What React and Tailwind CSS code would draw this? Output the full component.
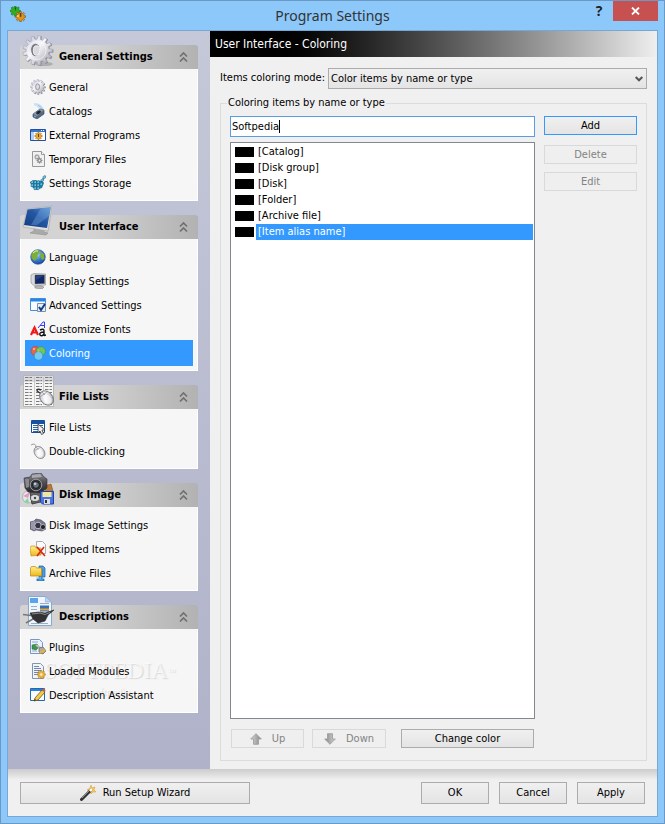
import React from "react";

const gearPath = (cx, cy, outer, inner, teeth) => {
  const points = [];
  const step = (Math.PI * 2) / teeth;
  for (let i = 0; i < teeth; i++) {
    const a = i * step;
    [[-0.3, inner], [-0.2, outer], [0.2, outer], [0.3, inner]].forEach(([t, r]) => {
      points.push(`${(cx + Math.cos(a + t * step) * r).toFixed(2)} ${(cy + Math.sin(a + t * step) * r).toFixed(2)}`);
    });
  }
  return `M${points.join("L")}Z`;
};

const Small = ({ children }) => (
  <svg viewBox="0 0 16 16" className="size-4 shrink-0" aria-hidden="true">{children}</svg>
);
const Large = ({ children }) => (
  <svg viewBox="0 0 32 32" className="size-8 shrink-0" aria-hidden="true">{children}</svg>
);

const Defs = () => (
  <svg className="absolute size-0" aria-hidden="true">
    <defs>
      <linearGradient id="silver" x1="0" y1="0" x2="1" y2="1">
        <stop offset="0" stopColor="#b9bcd0" /><stop offset=".45" stopColor="#f6f6fa" /><stop offset="1" stopColor="#9a9aa2" />
      </linearGradient>
      <linearGradient id="screen" x1="0" y1="1" x2="1" y2="0">
        <stop offset="0" stopColor="#123a80" /><stop offset=".55" stopColor="#2458a4" /><stop offset="1" stopColor="#5f98d4" />
      </linearGradient>
      <linearGradient id="folder" x1="0" y1="0" x2="0" y2="1">
        <stop offset="0" stopColor="#fff08a" /><stop offset="1" stopColor="#efb81c" />
      </linearGradient>
      <linearGradient id="dark" x1="0" y1="0" x2="0" y2="1">
        <stop offset="0" stopColor="#8b8b90" /><stop offset=".5" stopColor="#4b4b50" /><stop offset="1" stopColor="#28282b" />
      </linearGradient>
      <linearGradient id="arrow" x1="0" y1="0" x2="1" y2="0">
        <stop offset="0" stopColor="#d6d6d6" /><stop offset="1" stopColor="#858585" />
      </linearGradient>
      <radialGradient id="globe" cx=".4" cy=".3" r=".8">
        <stop offset="0" stopColor="#bfe0ff" /><stop offset=".5" stopColor="#3b7fd8" /><stop offset="1" stopColor="#123a8a" />
      </radialGradient>
    </defs>
  </svg>
);

const AppIcon = () => (
  <Small>
    <path d={gearPath(5.2, 5, 5.2, 3.8, 8)} fill="#2fae22" stroke="#1b6e15" strokeWidth=".5" />
    <path d="M4.6 1.5h1.6L5.8 5z" fill="#124e0e" />
    <path d={gearPath(10.5, 10.6, 5.2, 3.8, 8)} fill="#e0941b" stroke="#86500a" strokeWidth=".6" />
    <path d="M9.8 7h1.6v3.8h-1.6z" fill="#5a4030" /><circle cx="8" cy="10" r="1" fill="#ffd37a" />
  </Small>
);

const GearLarge = () => (
  <Large>
    <ellipse cx="22" cy="29" rx="9" ry="2" fill="#808080" opacity=".45" />
    <path d={gearPath(16.5, 16, 15, 11.6, 13)} fill="#8b8b99" />
    <path d={gearPath(15.5, 15.5, 14.8, 11.4, 13)} fill="url(#silver)" stroke="#a3a5b5" strokeWidth=".6" />
    <circle cx="15" cy="15.5" r="9" fill="none" stroke="#fff" strokeOpacity=".6" />
    <ellipse cx="13.5" cy="15" rx="4.4" ry="6.2" fill="#77777f" />
    <ellipse cx="14.5" cy="15.5" rx="3.2" ry="4.8" fill="#d9dae0" stroke="#f5f5f5" />
  </Large>
);
const MonitorLarge = () => (
  <Large>
    <path d="M12 22l9 1 1 4 4 1-2 2-16-2 4-2z" fill="#a9a9a9" stroke="#888" strokeWidth=".5" />
    <path d="M28 3l3-1-4 24-3 1z" fill="#c9c9c9" />
    <path d="M5 4L30 1 26 26 1 22z" fill="#dedede" stroke="#a5a5a5" strokeWidth=".6" />
    <path d="M5.500 4.500L29 2 25 23 2 20z" fill="url(#screen)" />
    <path d="M19 3l10-1-2 9-12 9H9z" fill="#8fc0ee" opacity=".3" />
  </Large>
);
const ListsLarge = () => (
  <Large>
    <path d="M1.5 .5h30v31h-30z" fill="#f5f5f5" stroke="#b7b7b7" />
    <path d="M2 1h29v6H2z" fill="#c9c9cf" opacity=".6" />
    {[3, 6, 9, 12, 15, 18, 21, 24, 27, 30].map((y) => (
      <path key={y} d={`M3 ${y - 0.5}h7M14 ${y - 0.5}h6M23 ${y - 0.5}h7`} stroke="#7c7c7c" strokeWidth="1" strokeDasharray="3 .5 1 .5" />
    ))}
    <path d="M12.5 2v28M21.5 2v28" stroke="#bbb" strokeWidth=".7" />
    <path d="M21 20l-6-4q0-3 4-1" fill="none" stroke="#333" strokeWidth="1.4" />
    <ellipse cx="24.500" cy="23" rx="6" ry="8" transform="rotate(-42 24.500 23)" fill="url(#silver)" stroke="#666" strokeWidth=".8" />
    <ellipse cx="25.500" cy="24" rx="3.500" ry="5" transform="rotate(-42 25.500 24)" fill="#fff" opacity=".6" />
    <path d="M18 22l8-6M20 17l3 3" stroke="#888" strokeWidth=".7" />
  </Large>
);
const CameraLarge = () => (
  <Large>
    <path d="M22 13l7-2 2 7-6 3z" fill="#b7793a" stroke="#714315" strokeWidth=".5" />
    <ellipse cx="6" cy="24" rx="5.5" ry="6" fill="#e4e7ea" stroke="#999" strokeWidth=".6" />
    <path d="M1 23l5 2 2-6z" fill="#e498c4" /><path d="M2 29l4-4 1 5z" fill="#83d795" />
    <path d="M8 19l10-2 4 11-12 3z" fill="#66666a" stroke="#3c3c3c" />
    <ellipse cx="13" cy="25" rx="4.500" ry="3.500" fill="#ddd" stroke="#555" /><circle cx="13" cy="25" r="1.200" fill="#444" />
    <path d="M2 5l6-1 2-3 9-1 3 4 3 2v9l-6 5-13-1-3-4z" fill="url(#dark)" stroke="#333" strokeWidth=".6" />
    <path d="M10 2l8-1 2 3-10 1z" fill="#aaaaae" /><path d="M3 6h4v8l-3 1z" fill="#8a8a8e" />
    <circle cx="14" cy="12" r="5.800" fill="#343438" stroke="#9a9aa0" /><circle cx="14" cy="12" r="3.4" fill="#66717c" stroke="#18181a" />
    <circle cx="13" cy="10.8" r="1.3" fill="#c2d0dc" />
    <path d="M18.500 18.500h13v12.500h-11l-2-2z" fill="#4a74e4" stroke="#2243a0" />
    <path d="M20.500 19h9v5h-9z" fill="#f1e6a0" /><path d="M22 26h6v5h-6z" fill="#d9dbe5" /><path d="M23 27h2v3h-2z" fill="#333" />
  </Large>
);
const PluginsLarge = () => (
  <Large>
    <path d="M6.500 1.500h17l6 5.500v23.500h-23z" fill="#eef5fd" stroke="#8ba9cc" />
    <path d="M8 3h8v5H8z" fill="#5aa5ea" /><path d="M23.500 1.500l6 5.500h-6z" fill="#b5d6f5" stroke="#8ba9cc" strokeWidth=".6" />
    <path d="M18 10.500h9v6h-9z" fill="#3570b5" /><path d="M18 13.500h9v2h-9z" fill="#dfa33a" />
    <path d="M9 11.500h6M9 14.500h6M18 8.500h9M9 28.500h17" stroke="#9baec2" />
    <path d="M1 19.500l8 1M4 28l7-4" stroke="#777" strokeWidth="1.6" />
    <path d="M8 18l9-1 6 1 9-3-6 5-3 6-7 2-5-4z" fill="#333336" stroke="#222" strokeWidth=".6" />
    <path d="M10 19l8-1 5 1.500 5-2" fill="none" stroke="#8a8a8a" />
  </Large>
);

const General = () => (
  <Small>
    <path d={gearPath(8.4, 8.4, 7.4, 5.6, 12)} fill="#888896" />
    <path d={gearPath(7.8, 7.8, 7.4, 5.6, 12)} fill="url(#silver)" stroke="#a5a7b5" strokeWidth=".4" />
    <ellipse cx="7.6" cy="7.8" rx="2" ry="3" fill="#dcdce1" stroke="#888" strokeWidth=".8" />
  </Small>
);
const Catalogs = () => (
  <Small>
    <path d="M4 0q9 0 10 8l-3 1Q9 4 4 2z" fill="#c6e2f4" /><path d="M8 2q4 2 5 6" stroke="#a5c8de" fill="none" />
    <path d="M3 11l7-5 4 1v4l-7 5-4-2z" fill="#566780" stroke="#34435a" strokeWidth=".6" />
    <path d="M3 11l7-5 4 1-7 6z" fill="#8596ac" /><ellipse cx="8.500" cy="9.500" rx="2.500" ry="1.500" transform="rotate(-30 8.500 9.500)" fill="#24262c" /><path d="M4 13l2 1" stroke="#77b4ff" />
  </Small>
);
const External = () => (
  <Small>
    <path d="M.5 2.5h15v11H.5z" fill="#fff" stroke="#244f9e" /><path d="M1 3h14v2H1z" fill="#3878cc" /><path d="M11 3h1v1h-1zm2 0h1v1h-1z" fill="#fff" />
    <path d="M1 5v8h3V5z" fill="#b3d1f2" /><path d={gearPath(8.5, 9, 3.8, 2.7, 8)} fill="#e9a92d" stroke="#a36314" strokeWidth=".5" /><path d="M8 7h1v3H8z" fill="#64401b" />
  </Small>
);
const Temporary = () => (
  <Small>
    <path d="M2.5.5h9l3 3v12h-12z" fill="#f1f1f1" stroke="#999" /><path d="M11.5.5v3h3" fill="#fff" stroke="#999" />
    <path d={gearPath(7, 6, 3, 2.2, 8)} fill="#aaa" /><circle cx="7" cy="6" r="1" fill="#eee" />
    <path d={gearPath(9.5, 9.5, 3, 2.2, 8)} fill="#8a8a8a" /><circle cx="9.500" cy="9.500" r="1" fill="#eee" />
  </Small>
);
const Storage = () => (
  <Small>
    <path d="M0 7l4-2 6 1 2-1 2 3-2 5-6 2-4-3z" fill="#237fa8" />
    {[[1, 6], [4, 6], [7, 6], [1, 9], [4, 9], [7, 9], [10, 8], [4, 12], [7, 12], [11, 4], [13, 1]].map(([x, y]) => (
      <path key={`${x}-${y}`} d={`M${x} ${y + 0.8}l1-1h1.5v2l-1 .8H${x}z`} fill="#69c4e4" stroke="#0e5579" strokeWidth=".5" />
    ))}
  </Small>
);
const Language = () => (
  <Small>
    <circle cx="8" cy="8" r="7.3" fill="url(#globe)" stroke="#234c91" strokeWidth=".6" />
    <path d="M1.500 5q3-5 7-4l1 3-2 2 0 3-3 3-3-3zM11 3l3 2 .5 5-2.500 1-2-4z" fill="#7dae35" /><path d="M3 4q3-3 5-2" stroke="#e9f5c5" fill="none" />
  </Small>
);
const Display = () => (
  <Small>
    <path d="M5 12l6 1 3 1-2 2-7-1z" fill="#b9b9b9" stroke="#777" strokeWidth=".5" />
    <path d="M1 2l3-1.500 11.500.5v11l-11 1-3.500-3z" fill="#dadada" stroke="#888" strokeWidth=".6" /><path d="M5 2h9.500v8.500L5 11z" fill="#102869" stroke="#666" strokeWidth=".5" /><path d="M6 3h7l-7 4z" fill="#2a427f" />
  </Small>
);
const Advanced = () => (
  <Small>
    <path d="M.5 1.5h15v12H.5z" fill="#f8fbff" stroke="#438dda" /><path d="M1 2h14v2.5H1z" fill="#2685e8" />
    <path d="M7.5 6.5h8v8h-8z" fill="#e7eef7" stroke="#7d90aa" /><path d="M9 10l2 3 4-6" fill="none" stroke="#123d87" strokeWidth="2" />
  </Small>
);
const Fonts = () => (
  <Small>
    <path d="M1 14L4.500 6.500 8 14M3 11.5h4" fill="none" stroke="#f01818" strokeWidth="2.200" />
    <path d="M8 7l5-6h1.500v6M10 4.500h5" fill="none" stroke="#3939f4" strokeWidth="1" />
    <path d="M10 9q4-2 4 1v4q0 1 2 0M14 11q-5 0-4 3 2 2 4-1" fill="none" stroke="#111" strokeWidth="1.4" />
  </Small>
);
const ColoringIcon = () => (
  <Small>
    <circle cx="5.5" cy="6" r="4.5" fill="#ec6549" stroke="#c33d26" strokeWidth=".6" /><circle cx="10.8" cy="6.3" r="4.6" fill="#6fc75c" stroke="#3e983a" strokeWidth=".6" />
    <circle cx="8.5" cy="10.8" r="4.4" fill="#73c9ee" stroke="#288ec1" strokeWidth=".7" /><path d="M8 4q2 1 1.500 3.500Q6.500 7 8 4" fill="#e5ae4e" /><circle cx="4" cy="4" r="1" fill="#ffc4a9" />
  </Small>
);
const FileList = () => (
  <Small>
    <path d="M1.5 1.5h13v12h-13z" fill="#fff" stroke="#174f9e" /><path d="M2 2h12v3H2z" fill="#17539f" />
    <path d="M3 6.500h10M3 8.500h10M3 10.500h10M3 12.500h10" stroke="#2768b5" /><path d="M8 5v9l2-2 1.5 3.5 2-1L12 11h3z" fill="#f0f0f0" stroke="#333" strokeWidth=".8" />
  </Small>
);
const Mouse = () => (
  <Small>
    <path d="M1 2q5-3 5 3" fill="none" stroke="#999" /><ellipse cx="9.5" cy="9.5" rx="5" ry="6.5" transform="rotate(-34 9.5 9.5)" fill="url(#silver)" stroke="#888" strokeWidth=".8" />
    <path d="M4 8l7-4M6 4l3 3" stroke="#999" strokeWidth=".7" /><ellipse cx="10" cy="10" rx="3" ry="4" transform="rotate(-34 10 10)" fill="#fff" opacity=".7" />
  </Small>
);
const Camera = () => (
  <Small>
    <path d="M0 5l4-1 2-2 5 1 4 3 1 6-4 2-6-1-2 1-4-2z" fill="#77768c" stroke="#4a485c" strokeWidth=".6" /><path d="M2 5v7M4 4v9" stroke="#bcbcd0" />
    <circle cx="8" cy="8.5" r="3.3" fill="#353441" stroke="#c2c2cf" /><circle cx="13" cy="10" r="2.6" fill="#24242d" stroke="#a6a6b5" />
  </Small>
);
const Skipped = () => (
  <Small>
    <path d="M6.500.5h6l3 3v9h-9z" fill="#fafafa" stroke="#aaa" /><path d="M0 7l1-2h4l1 2h5v7L1 15z" fill="url(#folder)" stroke="#b78417" strokeWidth=".6" />
    <path d="M7 6l8 9M14 6l-7 9" stroke="#dc2416" strokeWidth="1.600" />
  </Small>
);
const Archive = () => (
  <Small>
    <path d="M9 1h4l2 2v9h-3v2h2v2H7v-2h2v-3h3V4H9z" fill="#4d9fe0" stroke="#1560a3" strokeWidth=".7" />
    <path d="M.5 3l1-1.500h4l1 1.500h5v8H.5z" fill="url(#folder)" stroke="#b78417" strokeWidth=".7" /><path d="M6 13h5" stroke="#8cc9f2" />
  </Small>
);
const Plugin = () => (
  <Small>
    <path d="M.5.5h9l3 3v11H.5z" fill="#eaf2fc" stroke="#7896be" /><path d="M2 3h6M2 12h5" stroke="#91add1" />
    <path d="M2 6l5-1 2 3-3 3-4-1z" fill="#40944d" stroke="#226332" strokeWidth=".5" /><path d="M6 6l6 4" stroke="#bbb" strokeWidth="2" />
    <path d="M9 9l4-1 3 4-3 3-4-2z" fill="#b0aca1" stroke="#686250" strokeWidth=".7" /><path d="M10 14l5-3" stroke="#e7b32f" strokeWidth="2" />
  </Small>
);
const Modules = () => (
  <Small>
    <path d="M2.5.5h8l3 3v12h-11z" fill="#f0f4fb" stroke="#8193ae" /><path d="M4 3.500h5M4 5.500h7M4 7.500h7M4 9.500h5M4 11.500h4" stroke="#7187ad" />
    <path d={gearPath(11.3, 11.5, 4.2, 3, 8)} fill="#eeb33e" stroke="#a96b14" strokeWidth=".5" /><circle cx="11.3" cy="11.5" r="1.2" fill="#fff0c9" />
  </Small>
);
const Assistant = () => (
  <Small>
    <path d="M.5 1.500h14v12H.5z" fill="#f8fbff" stroke="#2469ae" /><path d="M1 2h13v2H1z" fill="#2b82dc" />
    <path d="M5 11l7-8 3 2-7 8-4 1z" fill="#f4cb45" stroke="#725220" strokeWidth=".8" /><path d="M12 3l1.500-1.500 2 1.500L15 5z" fill="#d65b3d" /><path d="M4 14l1-2 1 1z" fill="#222" />
  </Small>
);
const Wand = () => (
  <Small>
    <path d="M11 0l1 3 3-1-1 3 2 2-3 0-2 2-1-3-3-1 3-2z" fill="#f6c65a" stroke="#dd9b31" strokeWidth=".5" />
    <path d="M1.500 14.500L11 5" stroke="#333" strokeWidth="3" strokeLinecap="round" /><path d="M2 13L10 5" stroke="#aaa" strokeWidth=".8" /><path d="M10 6l2-2" stroke="#fff" strokeWidth="2.500" />
  </Small>
);
const Arrow = ({ down }) => (
  <svg viewBox="0 0 12 12" className={down ? "size-3 rotate-180" : "size-3"} aria-hidden="true">
    <path d="M6 .7l5.300 5.300H8.500v5.300h-5V6H.7z" fill="url(#arrow)" stroke="#999" strokeWidth=".8" />
  </svg>
);

const groups = [
  { title: "General Settings", Icon: GearLarge, items: [["General", General], ["Catalogs", Catalogs], ["External Programs", External], ["Temporary Files", Temporary], ["Settings Storage", Storage]] },
  { title: "User Interface", Icon: MonitorLarge, items: [["Language", Language], ["Display Settings", Display], ["Advanced Settings", Advanced], ["Customize Fonts", Fonts], ["Coloring", ColoringIcon]] },
  { title: "File Lists", Icon: ListsLarge, items: [["File Lists", FileList], ["Double-clicking", Mouse]] },
  { title: "Disk Image", Icon: CameraLarge, items: [["Disk Image Settings", Camera], ["Skipped Items", Skipped], ["Archive Files", Archive]] },
  { title: "Descriptions", Icon: PluginsLarge, items: [["Plugins", Plugin], ["Loaded Modules", Modules], ["Description Assistant", Assistant]] },
];

const Group = ({ title, Icon, items }) => (
  <section>
    <button type="button" className="flex h-6 w-full items-end gap-[5px] rounded-t-[3px] bg-linear-to-r from-[#d3d3d3] from-40% to-[#b2b2b2] pr-[10px] pb-[2px] pl-[2px] text-left font-bold">
      <Icon />
      <span className="grow leading-5">{title}</span>
      <svg viewBox="0 0 9 12" className="mb-1 h-3 w-[9px]" aria-hidden="true">
        <path d="M1 5.500L4.500 2 8 5.500M1 10.500L4.500 7 8 10.500" fill="none" stroke="#707070" strokeWidth="1.700" />
      </svg>
    </button>
    <ul className="border border-t-0 border-white bg-[#f6f6f6] px-1 pt-[6px] pb-[5px]">
      {items.map(([label, ItemIcon]) => (
        <li key={label} className="flex h-6 items-center">
          <a href="#" aria-current={label === "Coloring" ? "page" : undefined} className="relative z-10 flex h-[26px] grow items-center gap-[3px] pl-[5px] aria-[current=page]:bg-[#3399ff] aria-[current=page]:text-white">
            <ItemIcon />
            <span className="pt-px">{label}</span>
          </a>
        </li>
      ))}
    </ul>
  </section>
);

const Button = ({ children, border = "border-[#acacac]", className = "", ...rest }) => (
  <button type="button" className={`flex items-center justify-center border bg-linear-to-b from-[#f0f0f0] to-[#e4e4e4] disabled:border-[#d9d9d9] disabled:from-[#efefef] disabled:to-[#efefef] disabled:text-[#838383] ${border} ${className}`} {...rest}>
    {children}
  </button>
);

const entries = ["[Catalog]", "[Disk group]", "[Disk]", "[Folder]", "[Archive file]", "[Item alias name]"];

export default function App() {
  return (
    <div className="flex min-h-screen flex-col border border-[#6c99c4] bg-[#8dc8fb] px-[6px] pb-[6px] font-['DejaVu_Sans_Condensed','DejaVu_Sans',sans-serif] text-[11px] leading-[14px] text-black">
      <Defs />
      <header className="grid h-[29px] grid-cols-[1fr_auto_1fr] items-start">
        <div className="pt-[5px] pl-[3px]"><AppIcon /></div>
        <h1 className="pt-1 font-['Noto_Sans','Open_Sans',sans-serif] text-sm leading-[22px] text-[#333]">Program Settings</h1>
        <div className="flex justify-end">
          <button type="button" className="h-5 w-7 font-['Open_Sans',sans-serif] text-sm font-bold text-[#222]">?</button>
          <button type="button" aria-label="Close" className="flex h-5 w-[45px] items-center justify-center bg-[#c75050]">
            <svg viewBox="0 0 9 8" className="h-2 w-[9px]" aria-hidden="true"><path d="M1 .5l7 7M8 .5l-7 7" stroke="#fff" strokeWidth="1.800" /></svg>
          </button>
        </div>
      </header>

      <div className="flex grow flex-col border border-[#78a7d3] bg-[#f0f0f0]">
        <div className="flex grow">
          <nav aria-label="Settings" className="relative isolate flex w-[202px] shrink-0 flex-col gap-[14px] bg-linear-to-b from-[#c4c8d8] to-[#b0b2c9] px-3 pt-[14px]">
            {groups.map((g) => <Group key={g.title} {...g} />)}
            <div className="pointer-events-none absolute top-[626px] left-9 font-['Liberation_Serif',serif] text-[23px] leading-7 text-white/60 [text-shadow:1px_1px_1px_#bbbbbb80]">
              SOFTPEDIA<sup className="text-[8px]">™</sup>
              <div className="text-center text-[11px] leading-3">softpedia</div>
            </div>
          </nav>

          <main className="flex min-w-0 grow flex-col">
            <h2 className="h-[26px] bg-linear-to-r from-black from-10% to-[#efefef] pl-[5px] text-xs leading-[26px] text-white">User Interface - Coloring</h2>
            <div className="flex grow flex-col gap-[7px] px-[10px] pt-[11px] pb-2">
              <div className="flex items-center">
                <label htmlFor="mode" className="w-[108px] shrink-0 pb-px">Items coloring mode:</label>
                <div className="relative grow">
                  <select id="mode" className="block h-[21px] w-full appearance-none border border-[#acacac] bg-linear-to-b from-[#f0f0f0] to-[#e4e4e4] pl-[2px]">
                    <option>Color items by name or type</option>
                  </select>
                  <svg viewBox="0 0 8 6" className="pointer-events-none absolute top-2 right-1 h-[6px] w-2" aria-hidden="true"><path d="M.7 1L4 4.300 7.300 1" fill="none" stroke="#555" strokeWidth="2" /></svg>
                </div>
              </div>

              <fieldset className="flex grow flex-col border border-[#dcdcdc] px-[9px] pt-[6px] pb-3">
                <legend className="-ml-[3px] px-px">Coloring items by name or type</legend>
                <div className="flex grow gap-[9px]">
                  <div className="flex min-w-0 grow flex-col">
                    <div className="relative">
                      <input aria-label="Item name" defaultValue="Softpedia" className="block h-[21px] w-full border border-[#569de5] bg-white px-px outline-none" />
                      <span className="absolute top-1 left-[49px] h-[13px] w-px bg-black" />
                    </div>
                    <ul role="listbox" aria-label="Colored items" className="mt-[5px] grow border border-[#828790] bg-white p-px">
                      {entries.map((e, i) => (
                        <li key={e} role="option" aria-selected={i === 5} className="group flex h-4 items-center gap-[2px] pl-[3px]">
                          <span className="h-[10px] w-[19px] shrink-0 bg-black" />
                          <span className="h-4 grow pl-[2px] leading-[15px] group-aria-selected:bg-[#3399ff] group-aria-selected:text-white">{e}</span>
                        </li>
                      ))}
                    </ul>
                    <div className="mt-[10px] flex gap-2 px-px">
                      <Button disabled className="h-[19px] w-[73px] gap-[10px]"><Arrow />Up</Button>
                      <Button disabled className="h-[19px] w-[74px] gap-[10px]"><Arrow down />Down</Button>
                      <Button className="ml-[7px] h-[19px] grow">Change color</Button>
                    </div>
                  </div>
                  <div className="flex w-[93px] shrink-0 flex-col">
                    <Button border="border-[#3399ff]" className="h-[19px]">Add</Button>
                    <Button disabled className="mt-[10px] h-[19px]">Delete</Button>
                    <Button disabled className="mt-2 h-[19px]">Edit</Button>
                  </div>
                </div>
              </fieldset>
            </div>
          </main>
        </div>

        <footer className="flex h-[47px] gap-[10px] bg-[linear-gradient(#cccccc,#f0f0f0_11px)] px-3 pt-[13px]">
          <Button className="mr-auto h-[22px] w-[230px] gap-[7px]"><Wand />Run Setup Wizard</Button>
          <Button className="h-[22px] w-[68px]">OK</Button>
          <Button className="h-[22px] w-[68px]">Cancel</Button>
          <Button className="h-[22px] w-[68px]">Apply</Button>
        </footer>
      </div>
    </div>
  );
}
